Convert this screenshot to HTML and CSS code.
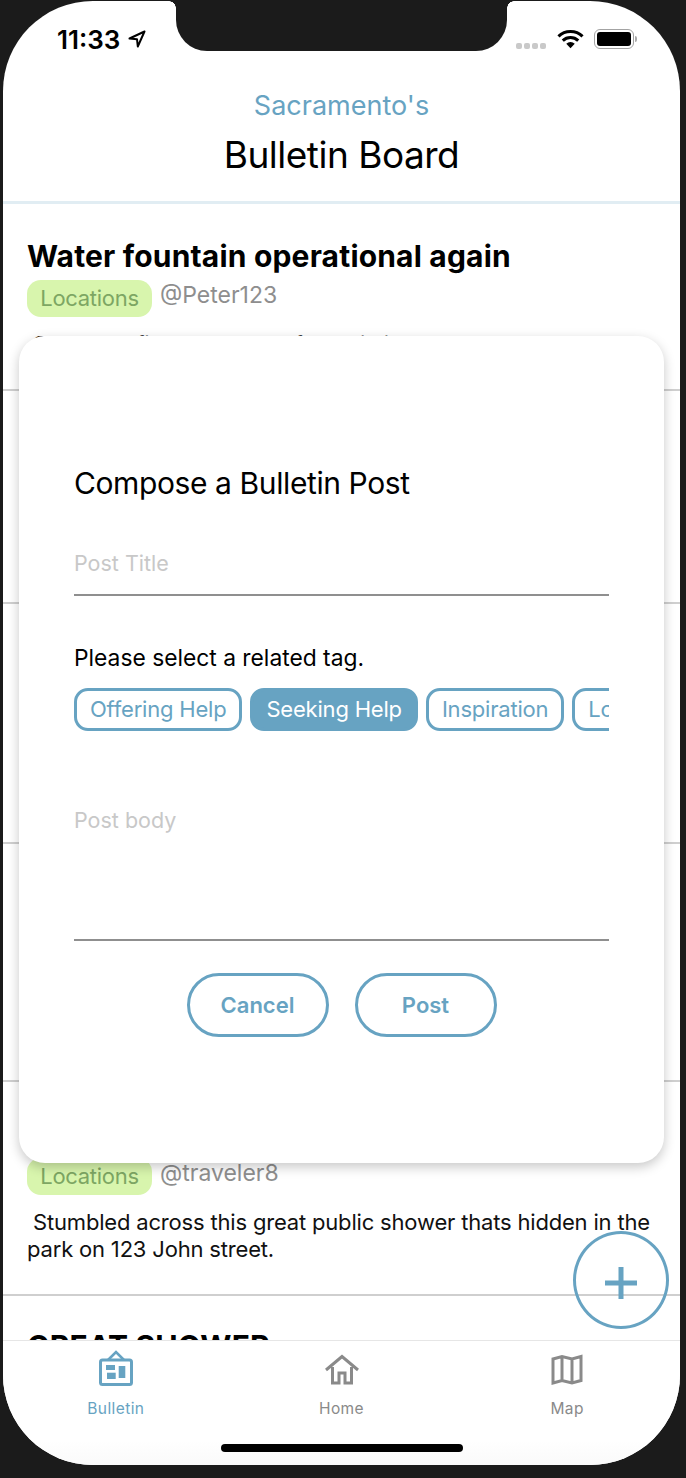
FILE: index.html
```html
<!DOCTYPE html>
<html lang="en">
<head>
<meta charset="utf-8">
<title>Bulletin Board</title>
<link rel="stylesheet" href="styles.css">
</head>
<body>
<div class="screen">
  <div class="notch"></div>
  <div class="status">
    <div class="status-left">
      <span class="time">11:33</span>
      <svg class="loc" viewBox="0 0 18 18"><path d="M16.500 1.500 1.500 8.500 9 9.200 9.800 16.500Z" fill="none" stroke="#000" stroke-width="2" stroke-linejoin="round"/></svg>
    </div>
    <div class="status-right">
      <div class="dots"><i></i><i></i><i></i><i></i></div>
      <svg class="wifi" viewBox="0 0 28 20"><path d="M1.500 7.200a18 18 0 0 1 25 0" fill="none" stroke="#000" stroke-width="3.200"/><path d="M6 11.600a11.800 11.800 0 0 1 16 0" fill="none" stroke="#000" stroke-width="3.200"/><path d="M14 19.500 9.600 15a6.200 6.200 0 0 1 8.800 0Z" fill="#000"/></svg>
      <div class="battery"><div class="battery-fill"></div></div>
      <div class="battery-cap"></div>
    </div>
  </div>
  <header class="head">
    <div class="city">Sacramento's</div>
    <h1 class="board">Bulletin Board</h1>
  </header>
  <main class="list">
    <article class="post post-a">
      <h2 class="post-title">Water fountain operational again</h2>
      <div class="meta"><span class="tag">Locations</span><span class="handle">@Peter123</span></div>
      <p class="body">&nbsp;Someone fixed the water fountain in the park. Now go</p>
    </article>
    <div class="post post-b"></div>
    <div class="post post-c"></div>
    <div class="post post-d"></div>
    <article class="post post-e">
      <h2 class="post-title">Great public shower</h2>
      <div class="meta"><span class="tag">Locations</span><span class="handle">@traveler8</span></div>
      <p class="body">&nbsp;Stumbled across this great public shower thats hidden in the park on 123 John street.</p>
    </article>
    <article class="post post-f">
      <h2 class="post-title">GREAT SHOWER</h2>
    </article>
  </main>
  <nav class="tabs">
    <div class="tab tab-active">
      <svg class="tab-icon" viewBox="0 0 34 36"><path d="M9 10 17 2 25 10" fill="none" stroke="currentColor" stroke-width="2.600"/><rect x="1.500" y="10" width="31" height="24.500" rx="2" fill="none" stroke="currentColor" stroke-width="3"/><rect x="7" y="15" width="9" height="5" fill="currentColor"/><rect x="19.700" y="16" width="6.600" height="12" fill="currentColor"/><rect x="8" y="22.700" width="8.700" height="6.300" fill="currentColor"/></svg>
      <span class="tab-label">Bulletin</span>
    </div>
    <div class="tab">
      <svg class="tab-icon" viewBox="0 0 34 36"><path d="M1 20 17 6.500 33 20" fill="none" stroke="currentColor" stroke-width="3"/><path d="M7.500 17v16h6.500V23h6v10h6.500V17" fill="none" stroke="currentColor" stroke-width="3"/></svg>
      <span class="tab-label">Home</span>
    </div>
    <div class="tab">
      <svg class="tab-icon" viewBox="0 0 34 36"><path d="M3 9 12 6.500 22 9 31 6.500V30.500L22 33 12 30.500 3 33Z M12 6.500V30.500 M22 9V33" fill="none" stroke="currentColor" stroke-width="3"/></svg>
      <span class="tab-label">Map</span>
    </div>
  </nav>
  <div class="home-bar"></div>
  <button class="fab"><svg class="plus" viewBox="0 0 32 32"><path d="M16 0v32M0 16h32" stroke="currentColor" stroke-width="5"/></svg></button>
  <section class="modal">
    <h3 class="modal-title">Compose a Bulletin Post</h3>
    <div class="field field-title"><span class="placeholder">Post Title</span></div>
    <div class="prompt">Please select a related tag.</div>
    <div class="chips">
      <span class="chip">Offering Help</span>
      <span class="chip chip-on">Seeking Help</span>
      <span class="chip">Inspiration</span>
      <span class="chip">Locations</span>
    </div>
    <div class="field field-body"><span class="placeholder">Post body</span></div>
    <div class="actions">
      <button class="action">Cancel</button>
      <button class="action">Post</button>
    </div>
  </section>
</div>
</body>
</html>
```
FILE: styles.css
```css
* { box-sizing: border-box; }
html, body { margin: 0; padding: 0; }
body {
  width: 686px;
  height: 1478px;
  background: #1b1b1b;
  padding: 1px 6px 13px 3px;
  font-family: Inter, "Liberation Sans", sans-serif;
  overflow: hidden;
}
.screen {
  position: relative;
  width: 677px;
  height: 1464px;
  background: #fff;
  border-radius: 90px;
  overflow: hidden;
  display: flex;
  flex-direction: column;
}
.notch {
  position: absolute;
  top: -1px;
  left: 173px;
  width: 331px;
  height: 51px;
  background: #1b1b1b;
  border-radius: 0 0 31px 31px;
}
.notch::before,
.notch::after {
  content: "";
  position: absolute;
  top: 1px;
  width: 7px;
  height: 7px;
}
.notch::before {
  left: -7px;
  background: radial-gradient(circle at 0 100%, transparent 6.500px, #1b1b1b 7px);
}
.notch::after {
  right: -7px;
  background: radial-gradient(circle at 100% 100%, transparent 6.500px, #1b1b1b 7px);
}
.status {
  height: 78px;
  flex: none;
  display: flex;
  justify-content: space-between;
  padding: 22px 43px 0 54px;
}
.status-left { display: flex; align-items: center; gap: 8px; height: 32px; }
.time { font-size: 26px; font-weight: 600; color: #000; }
.loc { width: 18px; height: 18px; }
.status-right { display: flex; align-items: center; height: 32px; }
.dots { display: flex; gap: 2px; margin: 14px 11px 0 0; }
.dots i { width: 6px; height: 6px; background: #c9c9c9; border-radius: 2px; display: block; }
.wifi { width: 27px; height: 20px; margin-right: 10px; }
.battery { width: 40px; height: 20px; border: 1.500px solid #a3a3a3; border-radius: 6px; padding: 2px; }
.battery-fill { width: 100%; height: 100%; background: #000; border-radius: 3px; }
.battery-cap { width: 2px; height: 6px; background: #aaa; margin-left: 1px; border-radius: 0 2px 2px 0; }
.head {
  flex: none;
  height: 125px;
  border-bottom: 3px solid #e1edf3;
  text-align: center;
}
.city { font-size: 27px; line-height: 32px; color: #67a3c2; margin-top: 11px; }
.board { margin: 8px 0 0; font-size: 37px; line-height: 50px; font-weight: 400; color: #000; letter-spacing: -0.5px; }
.list { flex: 1; min-height: 0; overflow: hidden; }
.post { border-bottom: 2px solid #cfcfcf; padding: 0 24px; }
.post-a { height: 187px; padding-top: 30px; }
.post-b { height: 213px; }
.post-c { height: 240px; }
.post-d { height: 238px; }
.post-e { height: 214px; padding-top: 30px; }
.post-f { border-bottom: 0; padding-top: 28px; }
.post-title { margin: 0; font-size: 30px; line-height: 44px; font-weight: 700; color: #000; letter-spacing: 0.18px; white-space: nowrap; }
.meta { display: flex; align-items: flex-start; margin-top: 2px; }
.tag {
  width: 125px;
  height: 37px;
  background: #d8f5ad;
  color: #7da663;
  border-radius: 14px;
  font-size: 22px;
  line-height: 37px;
  text-align: center;
  letter-spacing: -0.3px;
}
.handle { font-size: 23px; line-height: 30px; color: #8e8e8e; margin-left: 8px; }
.body { margin: 14px 0 0; font-size: 22px; line-height: 27px; color: #111; letter-spacing: -0.18px; }
.tabs {
  flex: none;
  height: 125px;
  border-top: 1px solid #e6e6e6;
  display: flex;
  background: linear-gradient(#fff 80%, #fafafa);
}
.tab {
  flex: 1;
  display: flex;
  flex-direction: column;
  align-items: center;
  color: #8a8a8a;
  padding-top: 9px;
}
.tab-active { color: #67a3c2; }
.tab-icon { width: 34px; height: 36px; }
.tab-label { font-size: 15.500px; line-height: 20px; margin-top: 13px; letter-spacing: 0.4px; }
.home-bar {
  position: absolute;
  left: 218px;
  bottom: 13px;
  width: 242px;
  height: 8px;
  background: #000;
  border-radius: 4px;
}
.fab {
  position: absolute;
  left: 570px;
  top: 1230px;
  width: 96px;
  height: 98px;
  border-radius: 50%;
  border: 3px solid #67a3c2;
  background: transparent;
  color: #67a3c2;
  padding: 0;
  display: flex;
  align-items: center;
  justify-content: center;
}
.plus { width: 32px; height: 32px; margin-top: 6px; }
.modal {
  position: absolute;
  left: 16px;
  top: 335px;
  width: 645px;
  height: 827px;
  background: #fff;
  border-radius: 26px;
  box-shadow: 0 4px 12px rgba(0, 0, 0, 0.22);
  padding: 127px 55px 0;
}
.modal-title { margin: 0; font-size: 30px; line-height: 40px; font-weight: 400; color: #000; letter-spacing: -0.4px; }
.field { border-bottom: 2px solid #8f8f8f; }
.field-title { height: 93px; padding-top: 45px; }
.field-body { height: 210px; padding-top: 74px; }
.placeholder { font-size: 21.500px; line-height: 30px; color: #c8c8c8; display: block; }
.prompt { font-size: 22.800px; line-height: 30px; color: #000; margin-top: 47px; }
.chips { display: flex; gap: 8px; overflow: hidden; margin-top: 15px; }
.chip {
  flex: none;
  height: 43px;
  border: 3px solid #67a3c2;
  border-radius: 14px;
  color: #67a3c2;
  font-size: 22px;
  line-height: 37px;
  padding: 0 13px;
  letter-spacing: -0.2px;
}
.chip-on { background: #67a3c2; color: #fff; }
.actions { display: flex; justify-content: center; gap: 26px; margin-top: 32px; }
.action {
  width: 142px;
  height: 64px;
  border: 3px solid #67a3c2;
  border-radius: 32px;
  background: #fff;
  color: #67a3c2;
  font-family: inherit;
  font-size: 22px;
  font-weight: 600;
  padding: 0;
}
```
